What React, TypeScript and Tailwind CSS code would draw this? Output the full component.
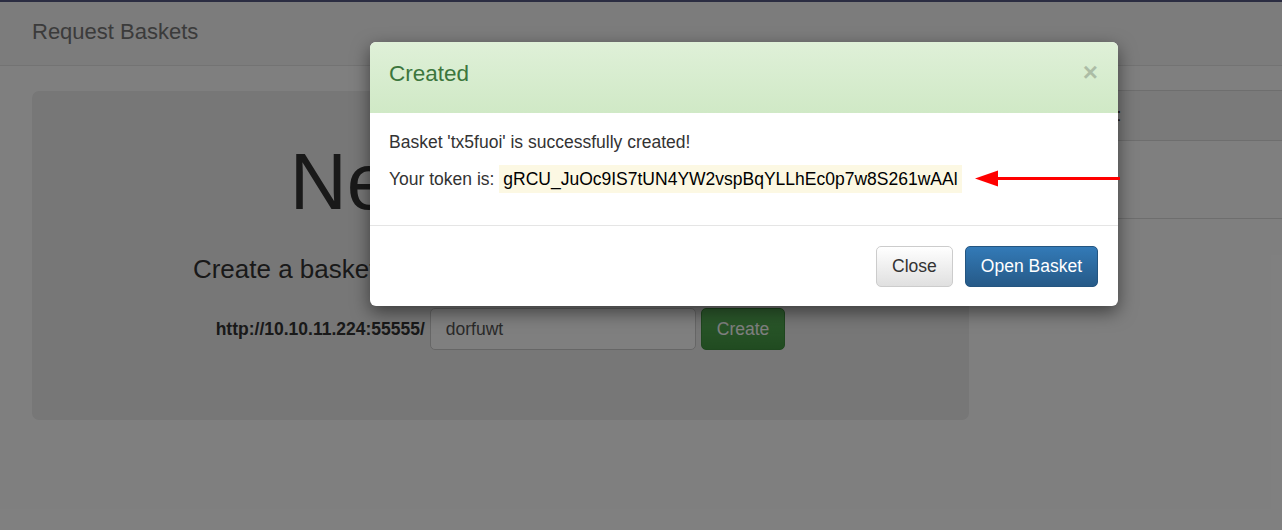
import React from 'react';

const TOKEN = 'gRCU_JuOc9IS7tUN4YW2vspBqYLLhEc0p7w8S261wAAl';

function Navbar() {
  return (
    <div className="h-[64px] bg-[#f8f8f8] border-b border-[#e7e7e7] flex items-start pt-[16px] pl-[32px]">
      <span className="text-[22px] leading-[28px] text-[#777]">Request Baskets</span>
    </div>
  );
}

function Jumbotron() {
  return (
    <div className="ml-[32px] w-[937px] h-[329px] shrink-0 rounded-[7px] bg-[#eee] flex flex-col items-center pt-[47px]">
      <h1 className="text-[79px] leading-[87px] text-[#333]">New Basket</h1>
      <p className="mt-[27px] text-[26px] leading-[34px] text-[#333]">
        Create a basket to collect and inspect HTTP requests
      </p>
      <div className="mt-[22px] flex items-center gap-[5px]">
        <label className="font-bold text-[17.5px] text-[#333]">http://10.10.11.224:55555/</label>
        <input
          readOnly
          value="dorfuwt"
          className="w-[266px] h-[42px] px-[15px] bg-white border border-[#ccc] rounded-[5px] text-[17.5px] text-[#555] outline-none"
        />
        <button className="h-[42px] px-[15px] bg-gradient-to-b from-[#5cb85c] to-[#419641] border border-[#3e8f3e] rounded-[5px] text-[17.5px] text-white">
          Create
        </button>
      </div>
    </div>
  );
}

function BasketPanel() {
  return (
    <div className="ml-[32px] mt-[-1px] flex-1">
      <div className="h-[51px] bg-[#f5f5f5] border-y border-l border-[#ddd] flex items-center pl-[24px]">
        <span className="text-[17.5px] text-[#333]">My Baskets:</span>
      </div>
      <div className="h-[78px] border-b border-l border-[#ddd] bg-white" />
    </div>
  );
}

function CreatedModal() {
  return (
    <div className="absolute left-[370px] top-[42px] w-[748px] z-50 bg-white rounded-[6px] overflow-hidden shadow-[0_6px_18px_rgba(0,0,0,0.5)]">
      <div className="h-[71px] bg-gradient-to-b from-[#dff0d8] to-[#d0e9c6] flex items-start justify-between pt-[18px] pl-[19px] pr-[20px]">
        <h4 className="text-[22.5px] leading-[28px] text-[#3c763d]">Created</h4>
        <span className="mt-[-1px] text-[26px] font-bold leading-none text-black opacity-20">×</span>
      </div>
      <div className="h-[112px] pt-[17px] px-[19px] text-[17.5px] leading-[25px] text-[#333]">
        <p>Basket 'tx5fuoi' is successfully created!</p>
        <p className="mt-[12px]">
          Your token is:{' '}
          <mark className="bg-[#fcf8e3] text-black px-[4px] py-[4px]">{TOKEN}</mark>
        </p>
      </div>
      <div className="h-[81px] border-t border-[#e5e5e5] flex items-center justify-end gap-[12px] pr-[20px]">
        <button className="h-[41px] px-[15px] rounded-[5px] border border-[#ccc] bg-gradient-to-b from-white to-[#e0e0e0] text-[17.5px] text-[#333]">
          Close
        </button>
        <button className="h-[41px] px-[15px] rounded-[5px] border border-[#245580] bg-gradient-to-b from-[#337ab7] to-[#265a88] text-[17.5px] text-white">
          Open Basket
        </button>
      </div>
    </div>
  );
}

export default function App() {
  return (
    <div className="relative h-[530px] overflow-hidden bg-white font-['Liberation_Sans',Arial,sans-serif]">
      <div className="relative z-[60] h-[2px] bg-[#2b2d42]" />
      <Navbar />
      <div className="flex pt-[25px]">
        <Jumbotron />
        <BasketPanel />
      </div>

      <div className="absolute inset-0 z-40 bg-black/50" />
      <CreatedModal />

      <svg className="absolute left-[970px] top-[168px] z-[60]" width="160" height="22" viewBox="0 0 160 22">
        <line x1="26" y1="10.5" x2="150" y2="10.5" stroke="#ff0000" strokeWidth="3" />
        <polygon points="5,10.5 28,2.5 28,18.5" fill="#ff0000" />
      </svg>
    </div>
  );
}
